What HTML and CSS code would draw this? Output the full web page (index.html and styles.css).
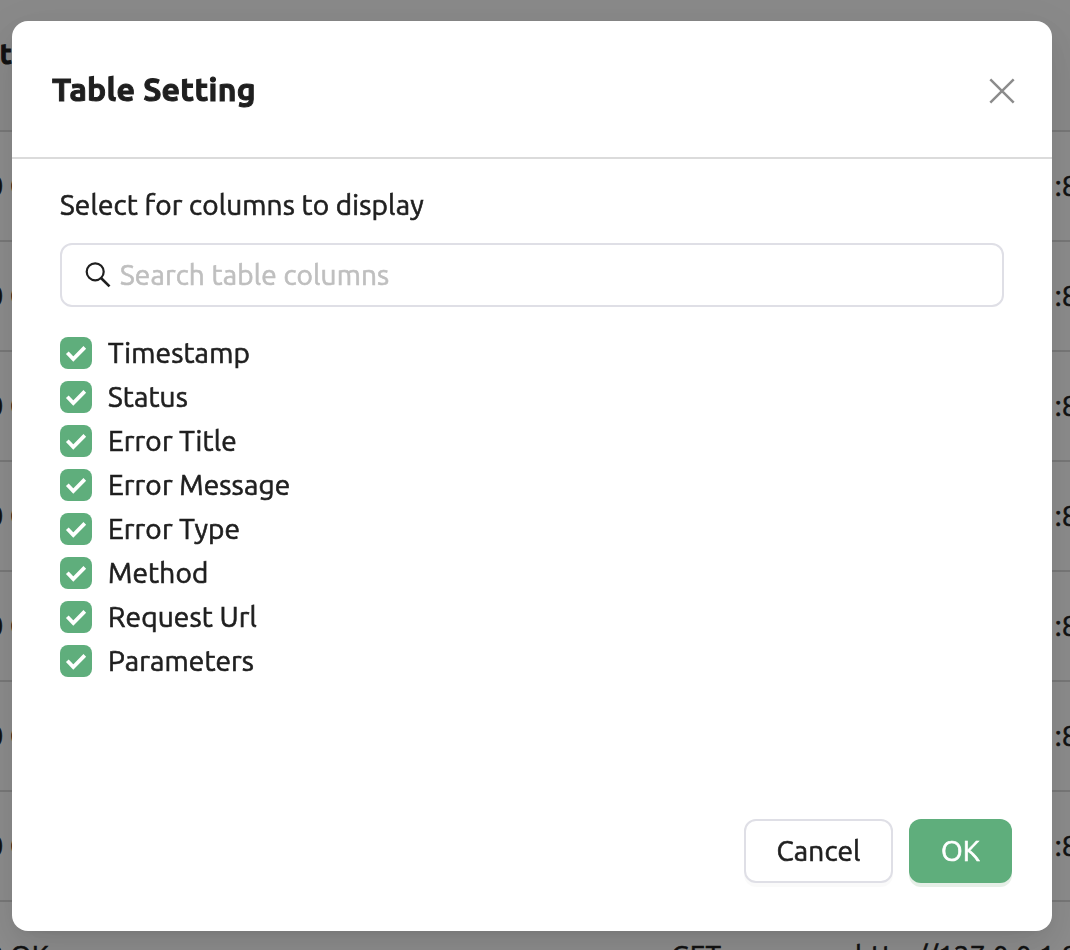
FILE: index.html
```html
<!DOCTYPE html>
<html lang="en">
<head>
<meta charset="utf-8">
<title>Table Setting</title>
<link rel="stylesheet" href="styles.css">
</head>
<body>
<svg class="defs" width="0" height="0" aria-hidden="true">
  <symbol id="check" viewBox="0 0 32 32"><path d="M7.3 15.8L13.3 22L24.8 10.4" fill="none" stroke="#fff" stroke-width="3.8"/></symbol>
</svg>
<div class="page" aria-hidden="true">
  <div class="row head"><div class="status">t</div></div>
  <div class="row"><div class="status">200 OK</div><div class="method">GET</div><div class="url">http://127.0.0.1:8000</div></div>
  <div class="row"><div class="status">200 OK</div><div class="method">GET</div><div class="url">http://127.0.0.1:8000</div></div>
  <div class="row"><div class="status">200 OK</div><div class="method">GET</div><div class="url">http://127.0.0.1:8000</div></div>
  <div class="row"><div class="status">200 OK</div><div class="method">GET</div><div class="url">http://127.0.0.1:8000</div></div>
  <div class="row"><div class="status">200 OK</div><div class="method">GET</div><div class="url">http://127.0.0.1:8000</div></div>
  <div class="row"><div class="status">200 OK</div><div class="method">GET</div><div class="url">http://127.0.0.1:8000</div></div>
  <div class="row"><div class="status">200 OK</div><div class="method">GET</div><div class="url">http://127.0.0.1:8000</div></div>
  <div class="row"><div class="status">200 OK</div><div class="method">GET</div><div class="url">http://127.0.0.1:8000</div></div>
</div>
<div class="mask">
  <div class="modal" role="dialog">
    <div class="modal-head">
      <h1 class="title">Table Setting</h1>
      <svg class="close" viewBox="0 0 28 28"><path d="M2.3 2.3L25.7 25.7M25.7 2.3L2.3 25.7" fill="none" stroke="#8c8c8c" stroke-width="2.5"/></svg>
    </div>
    <div class="modal-body">
      <div class="prompt">Select for columns to display</div>
      <div class="search">
        <svg class="search-icon" viewBox="0 0 28 28"><circle cx="11.2" cy="10.8" r="8.5" fill="none" stroke="#1f1f1f" stroke-width="2.2"/><path d="M17 17L25.5 25.4" stroke="#1f1f1f" stroke-width="2.6"/></svg>
        <span class="placeholder">Search table columns</span>
      </div>
      <div class="list">
        <div class="item"><svg class="box"><use href="#check"/></svg><span>Timestamp</span></div>
        <div class="item"><svg class="box"><use href="#check"/></svg><span>Status</span></div>
        <div class="item"><svg class="box"><use href="#check"/></svg><span>Error Title</span></div>
        <div class="item"><svg class="box"><use href="#check"/></svg><span>Error Message</span></div>
        <div class="item"><svg class="box"><use href="#check"/></svg><span>Error Type</span></div>
        <div class="item"><svg class="box"><use href="#check"/></svg><span>Method</span></div>
        <div class="item"><svg class="box"><use href="#check"/></svg><span>Request Url</span></div>
        <div class="item"><svg class="box"><use href="#check"/></svg><span>Parameters</span></div>
      </div>
    </div>
    <div class="modal-foot">
      <button class="btn cancel">Cancel</button>
      <button class="btn ok">OK</button>
    </div>
  </div>
</div>
</body>
</html>
```

FILE: styles.css
```css
* { box-sizing: border-box; }
body { margin: 0; height: 950px; overflow: hidden; background: #fff; color: #1f1f1f; font: 28px/44px Ubuntu, "Noto Sans", sans-serif; letter-spacing: .15px; -webkit-text-stroke: .65px currentColor; }
.defs { position: absolute; }
.page { height: 950px; overflow: hidden; }
.row { height: 110px; display: flex; align-items: center; border-bottom: 2px solid #dadada; white-space: nowrap; overflow: hidden; }
.head { height: 132px; background: #fafafa; font-weight: 700; padding-bottom: 22px; -webkit-text-stroke-width: 1px; }
.status { width: 49px; display: flex; justify-content: flex-end; flex: none; }
.head .status { width: 12px; }
.method { width: 184px; margin-left: 622px; flex: none; }
.mask { position: fixed; inset: 0; padding: 21px 18px 19px 12px; background: rgba(0,0,0,.45); display: flex; }
.modal { flex: 1; display: flex; flex-direction: column; background: #fff; border-radius: 16px; box-shadow: 0 12px 32px rgba(0,0,0,.08), 0 6px 12px -8px rgba(0,0,0,.12), 0 18px 56px 16px rgba(0,0,0,.05); }
.modal-head { height: 138px; border-bottom: 2px solid #dbdbdb; padding: 0 36px 0 40px; display: flex; align-items: center; justify-content: space-between; }
.title { margin: 0; font-size: 32px; font-weight: 700; letter-spacing: .3px; -webkit-text-stroke-width: 1px; }
.close { width: 28px; height: 28px; margin-top: 4px; }
.modal-body { flex: 1; padding: 24px 48px 0; }
.prompt { white-space: nowrap; }
.search { height: 64px; margin-top: 16px; border: 2px solid #dfdfe6; border-radius: 12px; padding-left: 22px; display: flex; align-items: center; gap: 8px; color: #bfbfbf; }
.search-icon { width: 28px; height: 28px; }
.list { margin-top: 24px; }
.item { height: 44px; display: flex; align-items: center; gap: 16px; }
.box { width: 32px; height: 32px; border-radius: 8px; background: #5fae7c; }
.modal-foot { padding: 0 40px 48px; display: flex; justify-content: flex-end; gap: 16px; }
.btn { height: 64px; border-radius: 12px; padding: 0; font: inherit; letter-spacing: inherit; color: #1f1f1f; }
.cancel { width: 149px; background: #fff; border: 2px solid #dfdfe6; box-shadow: 0 4px 0 rgba(0,0,0,.02); }
.ok { width: 103px; background: #5fae7c; border: 0; color: #fff; box-shadow: 0 4px 0 #e6efe7; }
```
